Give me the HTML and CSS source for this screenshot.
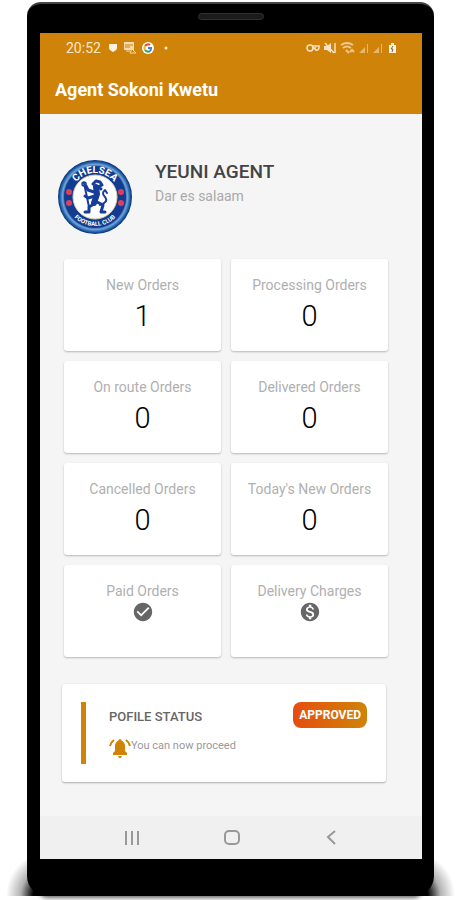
FILE: index.html
```html
<!DOCTYPE html>
<html lang="en">
  <head>
    <meta charset="UTF-8">
    <meta name="viewport" content="width=device-width, initial-scale=1">
    <title>Agent Sokoni Kwetu</title>
    <link rel="stylesheet" href="styles.css">
  </head>
  <body>
    <div class="phone">
      <div class="speaker"></div>
      <div class="screen">
        <header class="header">
          <div class="statusbar">
            <span class="clock">20:52</span>
            <svg class="notifications" width="64" height="14" viewBox="0 0 64 14">
              <path d="M1 3h8v4q0 2-4 4-4-2-4-4z" fill="#fff3df"/>
              <path d="M16 1h10v8H16z" fill="#f5d9ae"/>
              <path d="M17 4h8M17 6h5" stroke="#d08309"/>
              <path d="M18 10h4M22 12l2-4 4 4z" stroke="#f5d9ae" fill="#d08309"/>
              <circle cx="40" cy="7" r="6" fill="#fff"/>
              <g fill="none" stroke-width="2">
                <path d="M37 5a3.500 3.500 0 0 1 5-1" stroke="#e5493a"/>
                <path d="M37 5a4 4 0 0 0 0 4" stroke="#f2b52a"/>
                <path d="M37 9a3.500 3.500 0 0 0 5 1" stroke="#35a25a"/>
                <path d="M40 7h3q0 2-1 3" stroke="#427de0"/>
              </g>
              <circle cx="58" cy="7" r="1.500" fill="#fff3df"/>
            </svg>
            <svg class="signals" width="92" height="14" viewBox="0 0 92 14">
              <g fill="none" stroke="#f8e2c0" stroke-width="1.500">
                <circle cx="4" cy="7" r="3"/>
                <path d="M6 5h7v2q-1 3-3 2t-1-2H6"/>
                <path d="M19 2l9 10M29 2v10"/>
              </g>
              <path d="M18 5h3l4-3v10l-4-3h-3z" fill="#f8e2c0"/>
              <g fill="none" stroke="#edc88d" stroke-width="2">
                <path d="M35 4q6-4 12 0M37 7q4-3 8 0"/>
                <path d="M40 9l3 3M44 11l2-2 2 2"/>
              </g>
              <g fill="#e6b86e">
                <path d="M53 12l6-6v6zM61 3h1v9h-1z"/>
                <path d="M67 12l6-6v6zM75 3h1v9h-1z"/>
              </g>
              <path d="M83 4h2V2h3v2h2v8h-7z" fill="#fff3df"/>
              <path d="M87 5l-2 3h2l-1 3" fill="none" stroke="#6d644f"/>
            </svg>
          </div>
          <h1>Agent Sokoni Kwetu</h1>
        </header>

        <main class="content">
          <section class="profile">
            <svg class="crest" width="76" height="76" viewBox="0 0 76 76" role="img" aria-label="Chelsea Football Club">
              <defs>
                <radialGradient id="ring">
                  <stop offset="0.800" stop-color="#164b9b"/>
                  <stop offset="0.880" stop-color="#6fa3d8"/>
                  <stop offset="0.940" stop-color="#2264ae"/>
                  <stop offset="1" stop-color="#082c70"/>
                </radialGradient>
                <path id="top-arc" d="M14 38a24 24 0 0 1 48 0"/>
                <path id="bottom-arc" d="M9 38a29 29 0 0 0 58 0"/>
              </defs>
              <circle cx="38" cy="38" r="37" fill="url(#ring)"/>
              <circle cx="38" cy="38" r="31" fill="#123b91"/>
              <circle cx="38" cy="38" r="22" fill="#fff" stroke="#d9d3a7"/>
              <text class="crest-top"><textPath href="#top-arc" startOffset="50%">CHELSEA</textPath></text>
              <text class="crest-bottom"><textPath href="#bottom-arc" startOffset="50%">FOOTBALL CLUB</textPath></text>
              <g fill="#d9415e">
                <circle cx="12" cy="33" r="3"/>
                <circle cx="12" cy="44" r="3"/>
                <circle cx="64" cy="33" r="3"/>
                <circle cx="64" cy="44" r="3"/>
              </g>
              <g fill="none" stroke="#173d9c" stroke-linecap="round" stroke-linejoin="round">
                <path d="M39 28l1 7-3 9" stroke-width="6"/>
                <path d="M36 25l3-3 4 1 2 3-4 2 3 2" stroke-width="3"/>
                <path d="M37 33l-6-2-2-4M38 37l-7 2-3-2M37 45l-5 3v5h-4M40 43l6 3-2 7h4" stroke-width="3"/>
                <path d="M27 24l5 24M43 46q9-3 5-8-4-4 0-7l2 3" stroke-width="2"/>
                <circle cx="27" cy="25" r="2" stroke-width="1.500"/>
              </g>
            </svg>
            <div class="profile-text">
              <h2>YEUNI AGENT</h2>
              <p>Dar es salaam</p>
            </div>
          </section>

          <section class="orders">
            <div class="card"><h3>New Orders</h3><p>1</p></div>
            <div class="card"><h3>Processing Orders</h3><p>0</p></div>
            <div class="card"><h3>On route Orders</h3><p>0</p></div>
            <div class="card"><h3>Delivered Orders</h3><p>0</p></div>
            <div class="card"><h3>Cancelled Orders</h3><p>0</p></div>
            <div class="card"><h3>Today's New Orders</h3><p>0</p></div>
            <div class="card">
              <h3>Paid Orders</h3>
              <svg width="22" height="22" viewBox="0 0 24 24">
                <path d="M12 2C6.480 2 2 6.480 2 12s4.480 10 10 10 10-4.480 10-10S17.520 2 12 2zm-2 15l-5-5 1.410-1.410L10 14.170l7.590-7.590L19 8l-9 9z" fill="#666"/>
              </svg>
            </div>
            <div class="card">
              <h3>Delivery Charges</h3>
              <svg width="22" height="22" viewBox="0 0 24 24">
                <path d="M12 2C6.480 2 2 6.480 2 12s4.480 10 10 10 10-4.480 10-10S17.520 2 12 2zm1.410 16.090V20h-2.670v-1.930c-1.710-.36-3.160-1.460-3.270-3.400h1.960c.1 1.050.82 1.870 2.650 1.870 1.960 0 2.400-.98 2.400-1.590 0-.83-.44-1.610-2.670-2.140-2.480-.6-4.180-1.620-4.180-3.670 0-1.720 1.390-2.840 3.110-3.210V4h2.670v1.950c1.860.45 2.790 1.860 2.850 3.390H14.300c-.05-1.110-.64-1.870-2.220-1.870-1.500 0-2.400.68-2.400 1.640 0 .84.65 1.390 2.670 1.910s4.180 1.390 4.180 3.910c-.01 1.830-1.380 2.830-3.120 3.160z" fill="#666"/>
              </svg>
            </div>
          </section>

          <section class="status">
            <div class="bar"></div>
            <div class="status-text">
              <h3>POFILE STATUS</h3>
              <p>
                <svg width="22" height="20" viewBox="0 0 22 20">
                  <g fill="#d08309">
                    <path d="M11 1q1.500 0 1.500 1.500Q16 4 16 8v5l2 2v2H4v-2l2-2V8q0-4 3.500-5.500Q9.500 1 11 1z"/>
                    <path d="M9 18h4q-.500 2-2 2t-2-2z"/>
                  </g>
                  <path d="M5 2Q2 4 1 8M17 2q3 2 4 6" fill="none" stroke="#d08309" stroke-width="2"/>
                </svg>
                You can now proceed
              </p>
            </div>
            <span class="badge">APPROVED</span>
          </section>
        </main>

        <nav class="navbar">
          <button aria-label="Recent apps">
            <svg width="18" height="18" viewBox="0 0 18 18"><path d="M4 2v14M10 2v14M16 2v14"/></svg>
          </button>
          <button aria-label="Home">
            <svg width="18" height="18" viewBox="0 0 18 18"><rect x="3" y="2" width="14" height="13" rx="4"/></svg>
          </button>
          <button aria-label="Back">
            <svg width="18" height="18" viewBox="0 0 18 18"><path d="M13 2L6 8l7 7"/></svg>
          </button>
        </nav>
      </div>
    </div>
  </body>
</html>
```
FILE: styles.css
```css
* {
  box-sizing: border-box;
}
body {
  margin: 0;
  padding: 2px 27px 4px;
  min-height: 100vh;
  display: flex;
  background-color: white;
  /* soft floor shadow at both bottom corners */
  background-image:
    radial-gradient(ellipse 42px 44px at 12px 100%, black 35%, rgba(0, 0, 0, 0.3) 65%, transparent),
    radial-gradient(ellipse 42px 44px at 48px 100%, black 35%, rgba(0, 0, 0, 0.3) 65%, transparent);
  background-size: 60px 44px;
  background-position: right 0 bottom 4px, left 0 bottom 4px;
  background-repeat: no-repeat;
  font-family: Roboto, "Liberation Sans", sans-serif;
}
h1, h2, h3, p {
  margin: 0;
  font-weight: 400;
}
.phone {
  flex: 1;
  display: flex;
  flex-direction: column;
  padding: 0 12px 37px 13px;
  background-color: black;
  border-top: 2px solid #444;
  border-radius: 14px 14px 20px 20px;
  box-shadow: 0 14px 4px -12px rgba(0, 0, 0, 0.6);
}
.speaker {
  width: 66px;
  height: 7px;
  margin: 9px auto 13px;
  background-color: #1b1b1b;
  border: 1px solid #303030;
  border-radius: 4px;
}
.screen {
  flex: 1;
  display: flex;
  flex-direction: column;
  background-color: #f5f5f5;
}
.header {
  height: 81px;
  background-color: #d08309;
  color: white;
}
.statusbar {
  display: flex;
  align-items: center;
  height: 30px;
  padding: 0 24px 0 26px;
}
.clock {
  font-size: 14px;
  color: #fbe6c8;
}
.notifications {
  margin-left: 7px;
}
.signals {
  margin-left: auto;
}
h1 {
  padding-left: 15px;
  font-size: 18px;
  font-weight: 700;
  line-height: 53px;
}
.content {
  flex: 1;
  padding: 45px 34px 32px 24px;
}
.profile {
  display: flex;
  gap: 22px;
  margin-left: -7px;
}
.crest {
  flex: none;
}
.crest text {
  fill: white;
  font-weight: 700;
  text-anchor: middle;
}
.crest .crest-top {
  font-size: 10px;
}
.crest .crest-bottom {
  font-size: 6px;
}
.profile-text {
  padding-top: 1px;
}
.profile-text h2 {
  font-size: 19px;
  font-weight: 500;
  line-height: 24px;
  color: #444;
}
.profile-text p {
  font-size: 14px;
  line-height: 24px;
  color: #aaa;
}
.orders {
  display: grid;
  grid-template-columns: 1fr 1fr;
  gap: 10px;
  margin-top: 24px;
}
.card {
  display: flex;
  flex-direction: column;
  align-items: center;
  height: 92px;
  padding-top: 17px;
  background-color: white;
  border-radius: 3px;
  box-shadow: 0 1px 2px rgba(0, 0, 0, 0.25);
}
.card h3 {
  font-size: 14px;
  line-height: 18px;
  color: #b0b0b0;
}
.card p {
  font-size: 29px;
  font-weight: 300;
  line-height: 44px;
  color: black;
}
.card svg {
  margin-top: 1px;
}
.status {
  display: flex;
  align-items: flex-start;
  margin: 27px 2px 0 -2px;
  padding: 18px 19px;
  height: 98px;
  background-color: white;
  border-radius: 3px;
  box-shadow: 0 1px 2px rgba(0, 0, 0, 0.3);
}
.bar {
  width: 5px;
  height: 62px;
  background-color: #d08309;
}
.status-text {
  flex: 1;
  margin-left: 23px;
}
.status-text h3 {
  font-size: 13px;
  font-weight: 500;
  line-height: 29px;
  color: #666;
}
.status-text p {
  display: flex;
  font-size: 11px;
  line-height: 16px;
  padding-top: 7px;
  color: #999;
}
.badge {
  padding: 0 6px;
  background-image: linear-gradient(to right, #e64d0e, #cf8408);
  border-radius: 8px;
  color: white;
  font-size: 12px;
  font-weight: 700;
  line-height: 26px;
}
.navbar {
  display: flex;
  height: 43px;
  padding: 0 41px;
  background-color: #f0f0f0;
}
.navbar button {
  flex: 1;
  display: flex;
  align-items: center;
  justify-content: center;
  padding: 0;
  background: none;
  border: none;
}
.navbar svg {
  fill: none;
  stroke: #999;
  stroke-width: 2;
}
```
